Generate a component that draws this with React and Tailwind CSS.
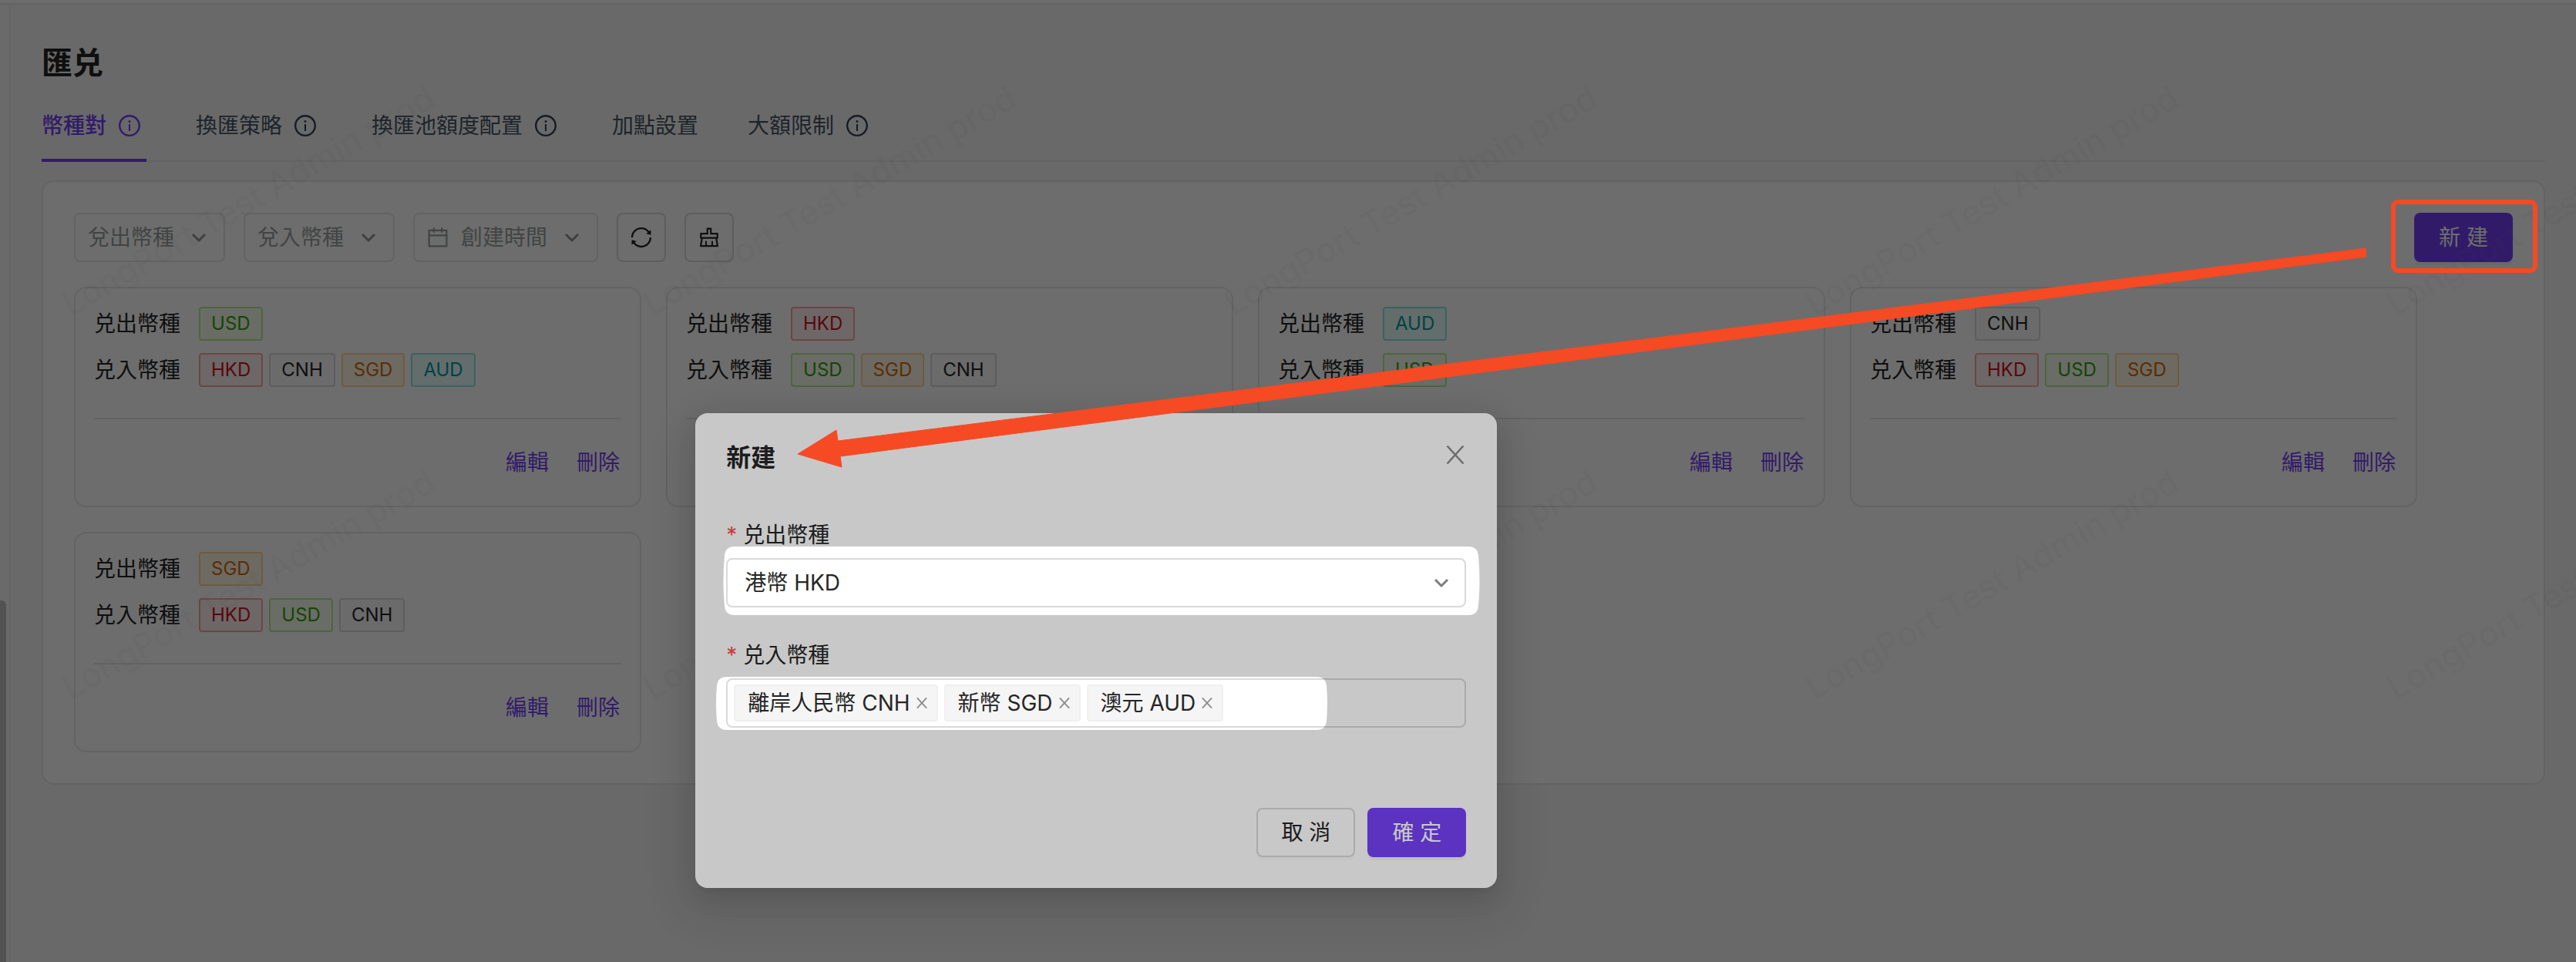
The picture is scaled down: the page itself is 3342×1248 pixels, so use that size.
import React from "react";
import {
  AiOutlineCalendar,
  AiOutlineClear,
  AiOutlineInfoCircle,
  AiOutlineSync,
} from "react-icons/ai";

const tabs = [
  { name: "幣種對", info: true, active: true },
  { name: "換匯策略", info: true },
  { name: "換匯池額度配置", info: true },
  { name: "加點設置" },
  { name: "大額限制", info: true },
];

const pairs = [
  { from: "USD", to: ["HKD", "CNH", "SGD", "AUD"] },
  { from: "HKD", to: ["USD", "SGD", "CNH"] },
  { from: "AUD", to: ["USD"] },
  { from: "CNH", to: ["HKD", "USD", "SGD"] },
  { from: "SGD", to: ["HKD", "USD", "CNH"] },
];

const tagColors = {
  USD: "border-[#b7eb8f] bg-[#f6ffed] text-[#389e0d]",
  HKD: "border-[#ffa39e] bg-[#fff1f0] text-[#cf1322]",
  SGD: "border-[#ffd591] bg-[#fff7e6] text-[#d46b08]",
  AUD: "border-[#87e8de] bg-[#e6fffb] text-[#08979c]",
  CNH: "border-[#d9d9d9] bg-[#fafafa] text-[#262626]",
};

const watermarkRows = [411, 909];
const watermarkColumns = [92, 846, 1600, 2354, 3108];

function Chevron({ className }) {
  return (
    <svg
      aria-hidden="true"
      viewBox="0 0 24 24"
      className={className}
      fill="none"
      stroke="currentColor"
      strokeWidth="3"
      strokeLinejoin="round"
    >
      <path d="M4 8L12 16L20 8" />
    </svg>
  );
}

function Cross({ className, strokeWidth }) {
  return (
    <svg
      aria-hidden="true"
      viewBox="0 0 24 24"
      className={className}
      fill="none"
      stroke="currentColor"
      strokeWidth={strokeWidth}
    >
      <path d="M1.5 0.5L22.5 23.5M22.5 0.5L1.5 23.5" />
    </svg>
  );
}

function Tag({ code }) {
  return (
    <span className={`flex h-11 items-center rounded-sm border-2 px-3.5 text-2xl ${tagColors[code]}`}>
      {code}
    </span>
  );
}

function FilterSelect({ label }) {
  return (
    <div className="relative">
      <select
        aria-label={label}
        defaultValue=""
        className="h-16 w-[196px] appearance-none rounded-lg border-2 border-[#e5e7eb] bg-white pr-12 pl-4 text-[28px] text-[#9c9f9f]"
      >
        <option value="">{label}</option>
      </select>
      <Chevron className="pointer-events-none absolute top-5 right-[22px] size-6 text-[#909494]" />
    </div>
  );
}

function PairCard({ pair }) {
  return (
    <article className="rounded-2xl border-2 border-[#e5e7eb] bg-white px-6 pt-6">
      <div className="flex items-center gap-6">
        <span>兑出幣種</span>
        <Tag code={pair.from} />
      </div>
      <div className="mt-4 flex items-center gap-6">
        <span>兑入幣種</span>
        <div className="flex gap-2">
          {pair.to.map((code) => (
            <Tag key={code} code={code} />
          ))}
        </div>
      </div>
      <div className="mt-10 flex h-[114px] items-center justify-end gap-9 border-t-2 border-[#e8e8e8] pr-0.5 text-[#7441f5]">
        <button type="button">編輯</button>
        <button type="button">刪除</button>
      </div>
    </article>
  );
}

function Page() {
  return (
    <div className="flex min-h-screen flex-col bg-[#f4f4f5]">
      <header className="h-1.5 border-b-2 border-[#e8e8ea] bg-white" />
      <div className="flex grow">
        <aside className="flex w-3.5 flex-col justify-end border-r-2 border-[#ececee] bg-[#f8f8f8]">
          <div className="h-[469px] w-2 rounded-tr-md bg-[#bfbfbf]" />
        </aside>
        <main className="grow px-10 pt-12">
          <h1 className="text-[40px] leading-14 font-bold">匯兑</h1>
          <nav className="mt-2 flex gap-16 border-b-2 border-[#e5e7eb]">
            {tabs.map((tab) => (
              <button
                key={tab.name}
                type="button"
                className={`-mb-0.5 flex h-[92px] items-center gap-3.5 border-b-4 pt-0.5 ${
                  tab.active
                    ? "border-[#7441f5] pr-1.5 font-medium text-[#7441f5]"
                    : tab.info
                      ? "border-transparent pr-1.5 text-gray-600"
                      : "border-transparent text-gray-600"
                }`}
              >
                {tab.name}
                {tab.info && (
                  <AiOutlineInfoCircle className={tab.active ? "size-8" : "size-8 text-gray-700"} />
                )}
              </button>
            ))}
          </nav>

          <section className="mt-6 rounded-2xl border-2 border-[#e5e7eb] bg-white p-10">
            <div className="flex items-center gap-6">
              <FilterSelect label="兌出幣種" />
              <FilterSelect label="兌入幣種" />
              <button
                type="button"
                className="flex h-16 w-60 items-center gap-3.5 rounded-lg border-2 border-[#e5e7eb] pl-3.5 text-[#9c9f9f]"
              >
                <AiOutlineCalendar className="size-8" />
                創建時間
                <Chevron className="ml-1.5 size-6 text-[#909494]" />
              </button>
              <button
                type="button"
                aria-label="刷新"
                className="flex size-16 items-center justify-center rounded-lg border-2 border-[#d9d9d9]"
              >
                <AiOutlineSync className="size-8" />
              </button>
              <button
                type="button"
                aria-label="清空"
                className="flex size-16 items-center justify-center rounded-lg border-2 border-[#d9d9d9]"
              >
                <AiOutlineClear className="size-8" />
              </button>
              <button
                type="button"
                className="ml-auto h-16 w-32 rounded-lg bg-[#7441f5] text-white shadow-[0_4px_0_rgba(0,0,0,0.04)]"
              >
                新 建
              </button>
            </div>
            <div className="mt-8 grid grid-cols-[repeat(auto-fill,736px)] gap-8">
              {pairs.map((pair) => (
                <PairCard key={pair.from} pair={pair} />
              ))}
            </div>
          </section>
        </main>
      </div>
    </div>
  );
}

function Watermark() {
  return (
    <svg
      aria-hidden="true"
      viewBox="0 0 3342 1248"
      preserveAspectRatio="xMinYMin slice"
      className="pointer-events-none absolute inset-0 size-full"
    >
      {watermarkRows.map((y) =>
        watermarkColumns.map((x) => (
          <text
            key={`${x}-${y}`}
            transform={`translate(${x} ${y}) rotate(-30)`}
            className="fill-[#8c8c8c]/8 text-[44px] font-medium"
          >
            LongPort Test Admin prod
          </text>
        )),
      )}
    </svg>
  );
}

function FieldLabel({ htmlFor, children }) {
  return (
    <label htmlFor={htmlFor} className="mb-2 flex h-11 items-center gap-2">
      <span className="w-3.5 text-[#ff4d4f]">*</span>
      {children}
    </label>
  );
}

function CreateDialog() {
  const chosen = ["離岸人民幣 CNH", "新幣 SGD", "澳元 AUD"];
  return (
    <div className="absolute inset-0 bg-black/45 pt-[536px]">
      <div
        role="dialog"
        aria-labelledby="create-title"
        className="ml-[27%] w-[1040px] rounded-2xl bg-white p-10 shadow-[0_12px_32px_rgba(0,0,0,0.08),0_6px_12px_-8px_rgba(0,0,0,0.12),0_18px_56px_16px_rgba(0,0,0,0.1)]"
      >
        <div className="flex h-8 items-start justify-between">
          <h2 id="create-title" className="text-[32px] leading-9 font-bold">
            新建
          </h2>
          <button type="button" aria-label="關閉" className="flex h-7 items-center pr-0.5 text-[#8c8c8c]">
            <Cross className="size-6" strokeWidth="2.5" />
          </button>
        </div>

        <div className="mt-16">
          <FieldLabel htmlFor="from-currency">兑出幣種</FieldLabel>
          <div className="relative">
            <select
              id="from-currency"
              className="h-16 w-full appearance-none rounded-lg border-2 border-[#d9d9d9] bg-white px-[22px]"
            >
              <option>港幣 HKD</option>
            </select>
            <Chevron className="pointer-events-none absolute top-5 right-5 size-6 text-[#7c7c7c]" />
          </div>
        </div>

        <div className="mt-10">
          <FieldLabel htmlFor="to-currency">兑入幣種</FieldLabel>
          <div className="flex h-16 items-center gap-2 rounded-lg border-2 border-[#d9d9d9] px-2">
            {chosen.map((name) => (
              <span
                key={name}
                className="flex h-12 items-center gap-2 rounded-sm border-2 border-[#f0f0f0] bg-[#f5f5f5] pr-3 pl-4 whitespace-nowrap"
              >
                {name}
                <button type="button" aria-label={`移除 ${name}`} className="text-[#8c8c8c]">
                  <Cross className="size-3.5" strokeWidth="3" />
                </button>
              </span>
            ))}
            <input id="to-currency" type="text" className="min-w-0 grow bg-transparent outline-none" />
          </div>
        </div>

        <div className="mt-[104px] flex justify-end gap-4">
          <button
            type="button"
            className="h-16 w-32 rounded-lg border-2 border-[#d9d9d9] bg-white shadow-[0_4px_0_rgba(0,0,0,0.02)]"
          >
            取 消
          </button>
          <button
            type="button"
            className="h-16 w-32 rounded-lg bg-[#7441f5] text-white shadow-[0_4px_0_rgba(0,0,0,0.04)]"
          >
            確 定
          </button>
        </div>
      </div>
    </div>
  );
}

// Guided-tour drawing: dims everything except the two form fields, then points from the button to the dialog.
function TourOverlay() {
  return (
    <svg
      aria-hidden="true"
      viewBox="0 0 3342 1248"
      preserveAspectRatio="xMinYMin slice"
      className="pointer-events-none absolute inset-0 size-full"
    >
      <mask id="spotlight">
        <rect width="3342" height="1248" fill="white" />
        <path
          fill="black"
          d="M953 709H1905Q1917 709 1918 721Q1921 754 1918 786Q1917 798 1905 798H953Q941 798 940 786Q937 754 940 721Q941 709 953 709Z"
        />
        <path
          fill="black"
          d="M943 878H1708Q1720 878 1721 890Q1723 912 1721 935Q1720 947 1708 947H943Q931 947 930 935Q928 912 930 890Q931 878 943 878Z"
        />
      </mask>
      <rect width="3342" height="1248" fill="black" fillOpacity="0.216" mask="url(#spotlight)" />
      <rect x="3105" y="262" width="184" height="89" rx="6" fill="none" stroke="#f54a24" strokeWidth="6" />
      <path
        fill="#f54a24"
        stroke="#f54a24"
        strokeWidth="1"
        strokeLinejoin="round"
        d="M1035 589L1085 558L1087 572L3069 322L3070 333L1090 592L1092 606Z"
      />
    </svg>
  );
}

export default function App() {
  return (
    <div className="relative overflow-hidden font-['Inter','Noto_Sans_CJK_TC',sans-serif] text-[28px] leading-10 text-[#262626]">
      <Page />
      <Watermark />
      <CreateDialog />
      <TourOverlay />
    </div>
  );
}
